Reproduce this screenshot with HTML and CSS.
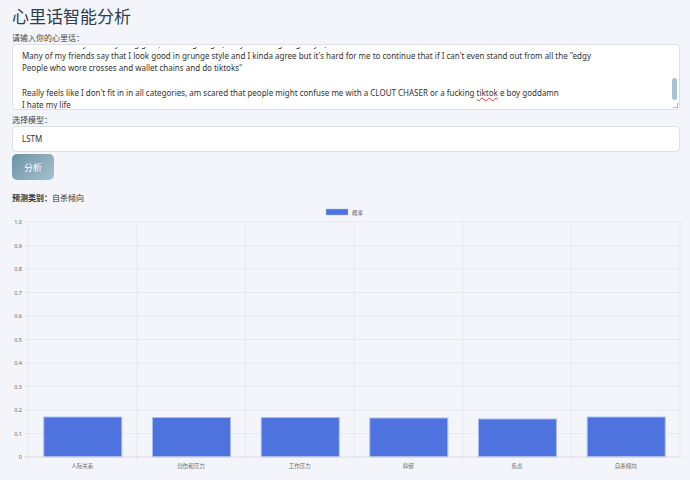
FILE: index.html
```html
<!DOCTYPE html>
<html lang="zh-CN">
<head>
  <meta charset="UTF-8">
  <title>心里话智能分析</title>
  <link rel="stylesheet" href="styles.css">
</head>
<body>
  <div class="page">
    <h1>心里话智能分析</h1>

    <label class="field-label">请输入你的心里话：</label>
    <div class="textbox">
      <div class="textbox-clip">
        <div class="textbox-inner">
          <p class="cut">and i'm not really into anything goth, emo or grunge (i only dress in grunge style)</p>
          <p>Many of my friends say that I look good in grunge style and I kinda agree but it's hard for me to continue that if I can't even stand out from all the "edgy</p>
          <p>People who wore crosses and wallet chains and do tiktoks"</p>
          <p>&nbsp;</p>
          <p>Really feels like I don't fit in in all categories, am scared that people might confuse me with a CLOUT CHASER or a fucking <span class="typo">tiktok</span> e boy goddamn</p>
          <p>I hate my life</p>
        </div>
      </div>
      <div class="scroll-thumb"></div>
      <div class="resize"></div>
    </div>

    <label class="field-label">选择模型：</label>
    <div class="select">LSTM</div>

    <button class="btn">分析</button>

    <div class="result"><b>预测类别：</b>自杀倾向</div>
  </div>

  <svg class="chart" width="690" height="270" viewBox="0 0 690 270">
    <!-- legend -->
    <rect x="326" y="3" width="22" height="6" fill="#4e73df" stroke="#a8bdf5" stroke-width="0.5"/>
    <text class="legend" x="352" y="8.5">概率</text>

    <!-- horizontal grid -->
    <g class="grid">
      <line x1="24" y1="16" x2="680" y2="16"/>
      <line x1="24" y1="39.5" x2="680" y2="39.5"/>
      <line x1="24" y1="63" x2="680" y2="63"/>
      <line x1="24" y1="86.5" x2="680" y2="86.5"/>
      <line x1="24" y1="110" x2="680" y2="110"/>
      <line x1="24" y1="133.5" x2="680" y2="133.5"/>
      <line x1="24" y1="157" x2="680" y2="157"/>
      <line x1="24" y1="180.5" x2="680" y2="180.5"/>
      <line x1="24" y1="204" x2="680" y2="204"/>
      <line x1="24" y1="227.5" x2="680" y2="227.5"/>
    </g>
    <g class="grid">
      <line x1="28" y1="16" x2="28" y2="255"/>
      <line x1="136.7" y1="16" x2="136.7" y2="255"/>
      <line x1="245.3" y1="16" x2="245.3" y2="255"/>
      <line x1="354" y1="16" x2="354" y2="255"/>
      <line x1="462.7" y1="16" x2="462.7" y2="255"/>
      <line x1="571.3" y1="16" x2="571.3" y2="255"/>
      <line x1="680" y1="16" x2="680" y2="255"/>
    </g>

    <!-- y labels -->
    <g class="ylab">
      <text x="22" y="18">1.0</text>
      <text x="22" y="41.5">0.9</text>
      <text x="22" y="65">0.8</text>
      <text x="22" y="88.5">0.7</text>
      <text x="22" y="112">0.6</text>
      <text x="22" y="135.5">0.5</text>
      <text x="22" y="159">0.4</text>
      <text x="22" y="182.5">0.3</text>
      <text x="22" y="206">0.2</text>
      <text x="22" y="229.5">0.1</text>
      <text x="22" y="253">0</text>
    </g>

    <!-- bars -->
    <g class="bars">
      <rect x="43.8" y="211" width="78" height="40"/>
      <rect x="152.5" y="211.5" width="78" height="39.5"/>
      <rect x="261.2" y="211.5" width="78" height="39.5"/>
      <rect x="369.8" y="212" width="78" height="39"/>
      <rect x="478.5" y="213" width="78" height="38"/>
      <rect x="587.2" y="211" width="78" height="40"/>
    </g>
    <line class="axis" x1="24" y1="251" x2="680" y2="251"/>

    <!-- x labels -->
    <g class="xlab">
      <text x="82.3" y="262">人际关系</text>
      <text x="191" y="262">创伤和压力</text>
      <text x="299.7" y="262">工作压力</text>
      <text x="408.3" y="262">抑郁</text>
      <text x="517" y="262">焦虑</text>
      <text x="625.7" y="262">自杀倾向</text>
    </g>
  </svg>
</body>
</html>
```

FILE: styles.css
```css
body {
  margin: 0;
  background: #f4f5fa;
  font-family: "Noto Sans", "Noto Sans CJK SC", sans-serif;
  color: #333;
}
.page {
  padding: 0 10px 0 12px;
}
h1 {
  margin: 0;
  padding-top: 6px;
  font-size: 17px;
  line-height: 22px;
  font-weight: normal;
  color: #2c3e50;
}
.field-label {
  display: block;
  font-size: 8px;
  line-height: 11px;
  margin-top: 4px;
  color: #444;
}
.textbox {
  position: relative;
  height: 64px;
  margin-top: 1px;
  box-sizing: content-box;
  background: #fff;
  border: 1px solid #dde1e7;
  border-radius: 4px;
}
.textbox-clip {
  position: absolute;
  top: 2px;
  left: 0;
  right: 0;
  bottom: 0;
  overflow: hidden;
}
.textbox-inner {
  margin-top: -9.5px;
  padding: 0 14px 0 9px;
  font-size: 8px;
  line-height: 12.3px;
  color: #333;
}
.textbox-inner p {
  margin: 0;
  white-space: nowrap;
}
.typo {
  text-decoration: underline wavy #e33;
  text-decoration-thickness: 0.5px;
}
.scroll-thumb {
  position: absolute;
  right: 2px;
  top: 33px;
  width: 5px;
  height: 22px;
  border-radius: 3px;
  background: #a9c2d4;
}
.resize {
  position: absolute;
  right: 1px;
  bottom: 1px;
  width: 4px;
  height: 4px;
  border-right: 1px solid #bbb;
  border-bottom: 1px solid #bbb;
}
.select {
  height: 26px;
  margin-top: 1px;
  box-sizing: border-box;
  padding: 0 9px;
  background: #fff;
  border: 1px solid #dde1e7;
  border-radius: 4px;
  font-size: 8px;
  line-height: 24px;
}
.btn {
  display: block;
  margin-top: 2px;
  width: 42px;
  height: 26px;
  border: 0;
  border-radius: 5px;
  background: linear-gradient(135deg, #6d93a7, #a6c0cd);
  color: #fff;
  font-family: inherit;
  font-size: 9px;
  padding: 0;
}
.result {
  margin-top: 12px;
  font-size: 8px;
  line-height: 12px;
  color: #333;
}
.result b {
  font-weight: bold;
}
.chart {
  display: block;
  margin-top: 2px;
  font-family: "Noto Sans", "Noto Sans CJK SC", sans-serif;
}
.grid line {
  stroke: #e3e4ea;
  stroke-width: 0.7;
}
.axis {
  stroke: #dcdde3;
  stroke-width: 1;
}
.bars rect {
  fill: #4e73df;
  stroke: #a9bdf4;
  stroke-width: 1;
}
.legend {
  font-size: 5.5px;
  fill: #666;
}
.ylab text {
  font-size: 5.5px;
  fill: #666;
  text-anchor: end;
}
.xlab text {
  font-size: 5.5px;
  fill: #666;
  text-anchor: middle;
}
```
